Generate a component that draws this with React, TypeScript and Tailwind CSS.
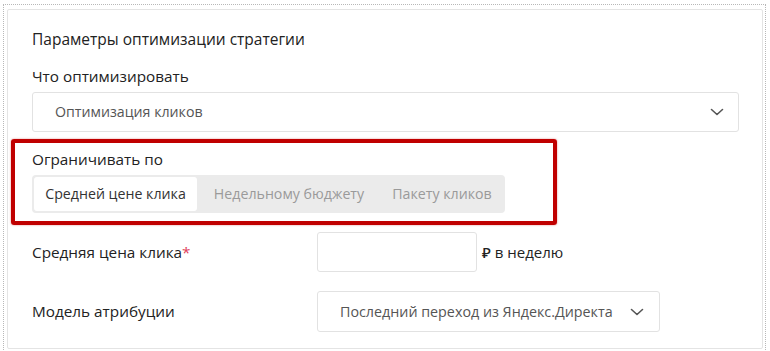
import React from "react";

const Chevron = () => (
  <svg width="14" height="8" viewBox="0 0 14 8" fill="none">
    <path d="M1.5 1.5 L7 6.5 L12.5 1.5" stroke="#555" strokeWidth="1.6" strokeLinecap="round" strokeLinejoin="round" />
  </svg>
);

export default function App() {
  return (
    <div className="w-[770px] h-[351px] overflow-hidden bg-white" style={{ fontFamily: '"Open Sans", "Noto Sans", sans-serif' }}>
      <div className="ml-[3px] mt-[4px] w-[763px] h-[360px] border border-dotted border-[#b8b8b8] pl-[3px] pt-[4px] pr-[1px]">
        <div className="w-[756px] border border-[#e4e4e4] rounded-[2px] pl-[24px] pr-[23px] pt-[19px] pb-[16px]">
          <div className="h-[20px] leading-[20px] text-[15.5px] text-[#222]">Параметры оптимизации стратегии</div>
          <div className="mt-[17px] h-[20px] leading-[20px] text-[15.3px] text-[#222]">Что оптимизировать</div>
          <div className="mt-[6px] h-[40px] border border-[#e2e2e2] rounded-[3px] flex items-center justify-between pl-[22px] pr-[14px]">
            <span className="text-[14.2px] text-[#555]">Оптимизация кликов</span>
            <Chevron />
          </div>
          <div className="mt-[7px] ml-[-21px] w-[546px] border-4 border-[#c00000] rounded-[3px] pl-[17px] pt-[7px] pb-[8px] shadow-[0_0_2px_rgba(192,0,0,0.5)]">
            <div className="h-[18px] leading-[18px] text-[15.3px] text-[#222]">Ограничивать по</div>
            <div className="mt-[7px] w-[473px] h-[38px] bg-[#ebebeb] rounded-[4px] p-[2px] flex items-stretch text-[14.2px]">
              <div className="bg-white rounded-[3px] w-[163px] flex items-center justify-center text-[#333]">Средней цене клика</div>
              <div className="w-[184px] flex items-center justify-center text-[#9a9a9a]">Недельному бюджету</div>
              <div className="flex-1 flex items-center justify-center text-[#9a9a9a]">Пакету кликов</div>
            </div>
          </div>
          <div className="mt-[7px] flex items-center h-[40px]">
            <div className="w-[285px] text-[15.3px] text-[#222]">
              Средняя цена клика<span className="text-[#e0405a]">*</span>
            </div>
            <div className="w-[160px] h-[40px] border border-[#e2e2e2] rounded-[3px]" />
            <div className="ml-[5px] text-[15px] text-[#222] font-medium">₽ в неделю</div>
          </div>
          <div className="mt-[19px] flex items-center h-[41px]">
            <div className="w-[285px] text-[15.3px] text-[#222]">Модель атрибуции</div>
            <div className="w-[343px] h-[41px] border border-[#e2e2e2] rounded-[3px] flex items-center justify-between pl-[22px] pr-[15px]">
              <span className="text-[14.3px] text-[#555]">Последний переход из Яндекс.Директа</span>
              <Chevron />
            </div>
          </div>
        </div>
      </div>
    </div>
  );
}
